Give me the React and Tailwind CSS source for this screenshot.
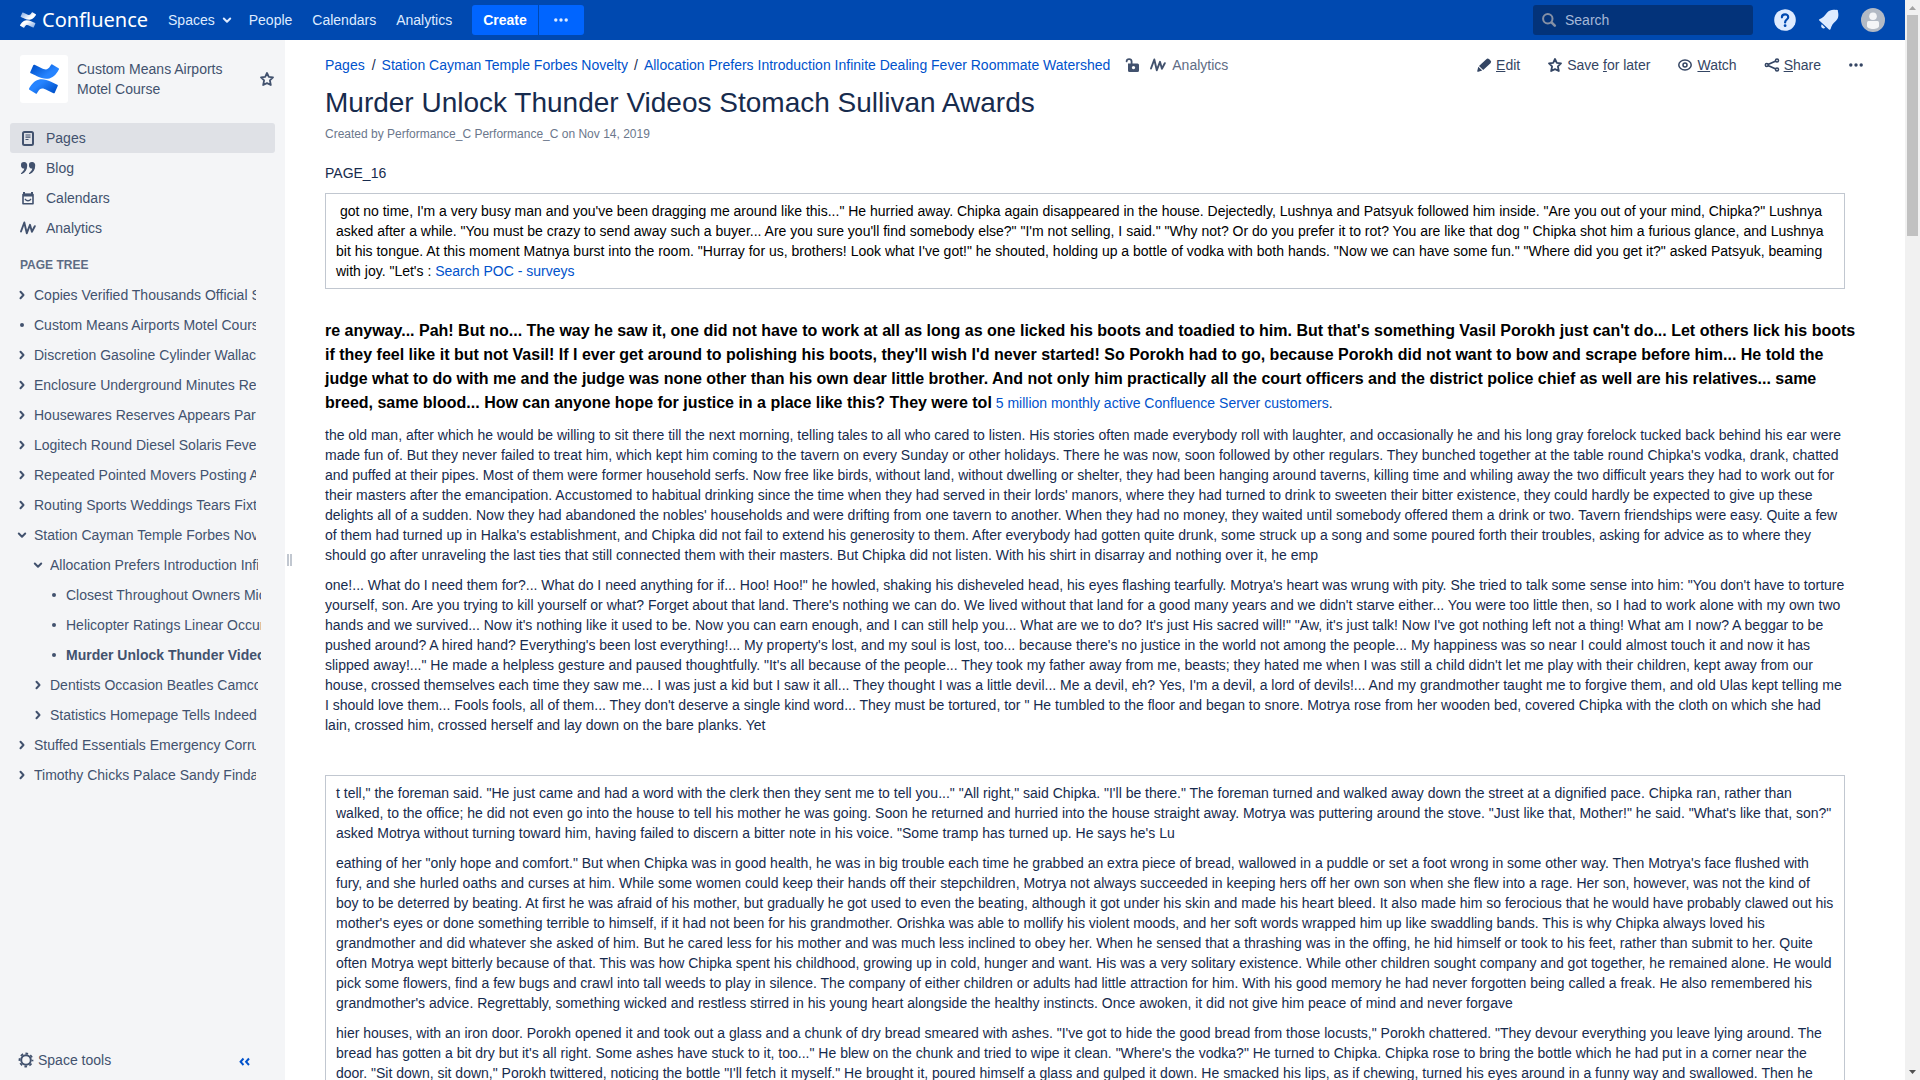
import React from "react";

const LOGO_BOTTOM =
  "M.87 18.257c-.248.382-.53.875-.763 1.245a.764.764 0 0 0 .255 1.04l4.965 3.054a.764.764 0 0 0 1.058-.26c.199-.332.454-.763.733-1.221 1.967-3.247 3.945-2.853 7.508-1.146l4.957 2.337a.764.764 0 0 0 1.028-.382l2.364-5.346a.764.764 0 0 0-.382-1 599.851 599.851 0 0 1-4.965-2.361C10.911 10.97 5.224 11.185.87 18.257z";
const LOGO_TOP =
  "M23.131 5.743c.249-.405.531-.875.764-1.25a.764.764 0 0 0-.256-1.034L18.675.404a.764.764 0 0 0-1.058.26c-.195.335-.451.763-.734 1.225-1.966 3.246-3.945 2.85-7.508 1.146L4.437.694a.764.764 0 0 0-1.027.382L1.046 6.422a.764.764 0 0 0 .382 1c1.039.49 3.105 1.467 4.965 2.361 6.698 3.246 12.392 3.029 16.738-4.04z";

function ConfluenceMark({ id, light, dark, className }) {
  return (
    <svg viewBox="0 0 24 24" className={className} aria-hidden="true">
      <defs>
        <linearGradient id={id + "-a"} x1="0" y1="0.3" x2="0.9" y2="0.9">
          <stop offset="0.3" stopColor={light} />
          <stop offset="1" stopColor={dark} />
        </linearGradient>
        <linearGradient id={id + "-b"} x1="1" y1="0.7" x2="0.1" y2="0.1">
          <stop offset="0.3" stopColor={light} />
          <stop offset="1" stopColor={dark} />
        </linearGradient>
      </defs>
      <path d={LOGO_BOTTOM} fill={`url(#${id}-a)`} />
      <path d={LOGO_TOP} fill={`url(#${id}-b)`} />
    </svg>
  );
}

function Icon({ children, className = "size-4" }) {
  return (
    <svg
      viewBox="0 0 16 16"
      fill="none"
      stroke="currentColor"
      strokeWidth="2"
      strokeLinecap="round"
      strokeLinejoin="round"
      className={className + " shrink-0"}
      aria-hidden="true"
    >
      {children}
    </svg>
  );
}

const StarIcon = () => (
  <Icon>
    <path
      strokeWidth="1.8"
      d="M8 2l1.8 3.9 4.2.5-3.1 2.9.9 4.7L8 12.1 4.200 14l.9-4.700L2 6.400l4.200-.5z"
    />
  </Icon>
);
const ActivityIcon = () => (
  <Icon>
    <path strokeWidth="1.900" d="M1 11.500L4.300 2.500 6.800 13.200 10 4.800l1.900 7L14.800 6.200" />
  </Icon>
);
const ChevronDown = ({ className }) => (
  <Icon className={className}>
    <path d="M4.800 6.500L8 9.700l3.200-3.200" />
  </Icon>
);
const ChevronRight = ({ className }) => (
  <Icon className={className}>
    <path d="M6.500 4.800L9.500 8l-3 3.200" />
  </Icon>
);
const Dot = ({ className }) => (
  <Icon className={className}>
    <circle cx="8" cy="8" r="2" fill="currentColor" stroke="none" />
  </Icon>
);
const DotsIcon = () => (
  <Icon>
    <g fill="currentColor" stroke="none">
      <circle cx="2.800" cy="8" r="1.700" />
      <circle cx="8" cy="8" r="1.700" />
      <circle cx="13.200" cy="8" r="1.700" />
    </g>
  </Icon>
);
const PagesIcon = () => (
  <Icon>
    <rect x="3" y="2" width="10" height="13" rx="1.500" />
    <path strokeWidth="1.200" strokeLinecap="butt" d="M5.500 5h5M5.500 7.200h5M5.500 9.500h3" />
  </Icon>
);
const BlogIcon = () => (
  <Icon>
    <g fill="currentColor" stroke="none">
      <path d="M4 2a3 3 0 0 1 3.200 3.400c0 4.200-1.900 7.200-5.400 8.600-.8.200-1.200-.6-.5-1.100 1.700-1.200 2.700-2.600 3-4.300A3 3 0 0 1 1 5.200 3 3 0 0 1 4 2z" />
      <path d="M12 2a3 3 0 0 1 3.200 3.400c0 4.200-1.900 7.200-5.400 8.600-.8.200-1.200-.6-.5-1.100 1.700-1.200 2.700-2.600 3-4.300A3 3 0 0 1 9 5.200 3 3 0 0 1 12 2z" />
    </g>
  </Icon>
);
const CalendarIcon = () => (
  <Icon>
    <path strokeWidth="1.600" d="M3 4.500h10v9.200H3z" />
    <path fill="currentColor" stroke="none" d="M3 2h2v1.500h6V2h2v4.500H3z" />
    <path strokeWidth="1.300" d="M5.300 9.300c1.200 1.900 4.200 1.900 5.400 0" />
  </Icon>
);
const PencilIcon = () => (
  <Icon>
    <path
      fill="currentColor"
      stroke="none"
      d="M10.300 2.200a2 2 0 0 1 2.700-.1l1.500 1.500a1.800 1.800 0 0 1 0 2.600L7.200 13 3 8.900zM2.300 9.800L6.200 13.600l-3.900 1.200c-.8.200-1.300-.3-1-1z"
    />
  </Icon>
);
const EyeIcon = () => (
  <Icon>
    <ellipse cx="8" cy="8" rx="6.200" ry="4.900" strokeWidth="1.500" />
    <circle cx="8" cy="8" r="2" strokeWidth="1.500" />
  </Icon>
);
const ShareIcon = () => (
  <Icon>
    <g strokeWidth="1.500">
      <circle cx="2.800" cy="8" r="1.500" />
      <circle cx="13" cy="3.500" r="1.500" />
      <circle cx="13" cy="12.600" r="1.500" />
      <path strokeWidth="1.800" d="M4.500 7.300l6.800-3M4.500 8.800l6.800 3" />
    </g>
  </Icon>
);
const UnlockIcon = () => (
  <Icon>
    <path
      fill="currentColor"
      stroke="none"
      fillRule="evenodd"
      d="M4 6.500h9.500a1.500 1.500 0 0 1 1.500 1.500v5.500a1.500 1.500 0 0 1-1.500 1.500H5.500A1.500 1.500 0 0 1 4 13.500zM9.500 8.900a1.700 1.700 0 1 0 0 3.400 1.700 1.700 0 0 0 0-3.400z"
    />
    <path strokeWidth="1.800" d="M2.600 4.400c.2-3 4.800-3 5 0v2.400" />
  </Icon>
);
const CogIcon = () => (
  <Icon>
    <circle cx="8" cy="8" r="4.800" strokeWidth="2" />
    <circle cx="8" cy="8" r="6.500" strokeWidth="1.800" strokeLinecap="butt" strokeDasharray="2.700 2.405" strokeDashoffset="1.350" />
  </Icon>
);
const SearchIcon = () => (
  <Icon>
    <circle cx="6.800" cy="6.700" r="4.700" />
    <path strokeWidth="2.600" d="M10.800 10.700l3 3" />
  </Icon>
);
const HelpIcon = () => (
  <svg viewBox="0 0 24 24" className="size-6" aria-hidden="true">
    <circle cx="12" cy="12" r="10.800" fill="#deebff" />
    <path
      d="M8.900 9.300c0-4 6.400-4 6.300-.1 0 2.300-3.100 2.400-3.100 5.300"
      fill="none"
      stroke="#0049b0"
      strokeWidth="2.200"
      strokeLinecap="round"
    />
    <circle cx="12.100" cy="17.700" r="1.400" fill="#0049b0" />
  </svg>
);
const BellIcon = () => (
  <svg viewBox="0 0 24 24" className="size-6" fill="#deebff" aria-hidden="true">
    <path d="M2.500 11.200C6 9.800 8 7.500 10.200 4.500c2.200-2.800 5.600-3.200 9-2.600.9-.6 2.200.4 1.700 1.600 1 3.500.6 7.200-2.100 9.500-2.700 2.300-4.400 4.600-5.200 8-.3.900-1 1-1.600.4L2.300 12.500c-.6-.6-.4-1.100.2-1.300z" />
    <path d="M4.800 16.200l3.400 3.500c-1.100 1-2.400.9-3.200.1-.9-.8-1.100-2.300-.2-3.600z" />
  </svg>
);
const AvatarIcon = () => (
  <svg viewBox="0 0 24 24" className="size-6" aria-hidden="true">
    <circle cx="12" cy="12" r="12" fill="#b3bac5" />
    <circle cx="12" cy="8.300" r="3.800" fill="#f4f5f7" />
    <path fill="#f4f5f7" d="M6 14.500A1.500 1.500 0 0 1 7.500 13h9a1.500 1.500 0 0 1 1.500 1.500V18c0 4-12 4-12 0z" />
  </svg>
);

function Header() {
  return (
    <header className="flex h-10 shrink-0 items-center bg-[#0049b0] pr-5 pl-5 text-[#deebff]">
      <a href="#home" className="mr-5 flex items-center gap-[6px] text-white">
        <ConfluenceMark id="brand" light="#ffffff" dark="#8fb2e6" className="size-4" />
        <span className="font-['Noto_Sans',sans-serif] text-xl leading-10">Confluence</span>
      </a>
      <nav className="flex items-center gap-5">
        <button type="button" className="-mr-[6px] flex items-center gap-1">
          Spaces
          <ChevronDown className="size-4" />
        </button>
        <a href="#people">People</a>
        <a href="#calendars">Calendars</a>
        <a href="#analytics">Analytics</a>
      </nav>
      <div className="ml-5 flex h-[30px] gap-px">
        <button type="button" className="rounded-l-[3px] bg-[#0065ff] px-[11px] font-bold text-white">
          Create
        </button>
        <button
          type="button"
          aria-label="Create from template"
          className="flex w-[45px] items-center justify-center rounded-r-[3px] bg-[#0065ff]"
        >
          <DotsIcon />
        </button>
      </div>
      <div className="ml-auto flex items-center">
        <label className="mr-5 flex h-[30px] w-[220px] items-center gap-2 rounded-[3px] bg-[#03337a] px-2 text-[#8590a5]">
          <SearchIcon />
          <input
            type="search"
            placeholder="Search"
            aria-label="Search"
            className="w-full bg-transparent text-[#deebff] outline-none placeholder:text-[#a5b8d8]"
          />
        </label>
        <div className="flex items-center gap-5">
          <button type="button" aria-label="Help"><HelpIcon /></button>
          <button type="button" aria-label="Notifications"><BellIcon /></button>
          <button type="button" aria-label="Profile"><AvatarIcon /></button>
        </div>
      </div>
    </header>
  );
}

const spaceLinks = [
  ["Pages", PagesIcon, true],
  ["Blog", BlogIcon, false],
  ["Calendars", CalendarIcon, false],
  ["Analytics", ActivityIcon, false],
];

const tree = [
  ["Copies Verified Thousands Official Site", "closed", 0],
  ["Custom Means Airports Motel Course", "leaf", 0],
  ["Discretion Gasoline Cylinder Wallace", "closed", 0],
  ["Enclosure Underground Minutes Reads", "closed", 0],
  ["Housewares Reserves Appears Parts", "closed", 0],
  ["Logitech Round Diesel Solaris Fever", "closed", 0],
  ["Repeated Pointed Movers Posting Ages", "closed", 0],
  ["Routing Sports Weddings Tears Fixture", "closed", 0],
  ["Station Cayman Temple Forbes Novelty", "open", 0],
  ["Allocation Prefers Introduction Infinite", "open", 1],
  ["Closest Throughout Owners Michael", "leaf", 2],
  ["Helicopter Ratings Linear Occur", "leaf", 2],
  ["Murder Unlock Thunder Videos", "current", 2],
  ["Dentists Occasion Beatles Camcorder", "closed", 1],
  ["Statistics Homepage Tells Indeed", "closed", 1],
  ["Stuffed Essentials Emergency Corrupt", "closed", 0],
  ["Timothy Chicks Palace Sandy Findarticles", "closed", 0],
];

const treeIndent = [
  "pl-[14px] w-[256px]",
  "pl-[30px] w-[258px]",
  "pl-[46px] w-[261px]",
];

function TreeItem({ label, state, depth }) {
  return (
    <li className={"flex h-[30px] items-center gap-1 overflow-hidden " + treeIndent[depth]}>
      {state === "closed" && <ChevronRight className="size-4" />}
      {state === "open" && <ChevronDown className="size-4" />}
      {(state === "leaf" || state === "current") && <Dot className="size-4" />}
      <a
        href="#page"
        aria-current={state === "current" ? "page" : undefined}
        className={"overflow-hidden whitespace-nowrap " + (state === "current" ? "font-bold" : "")}
      >
        {label}
      </a>
    </li>
  );
}

function Sidebar() {
  return (
    <aside className="flex w-[285px] shrink-0 flex-col bg-[#f4f5f7] text-[#42526e]">
      <div className="flex items-center px-[10px] pt-[15px]">
        <span className="ml-[10px] flex size-12 shrink-0 items-center justify-center rounded-[3px] bg-white">
          <ConfluenceMark id="space" light="#2684ff" dark="#0052cc" className="size-[30px]" />
        </span>
        <a href="#space" className="mr-6 ml-[9px] flex-1">Custom Means Airports Motel Course</a>
        <button type="button" aria-label="Add space to favourites"><StarIcon /></button>
      </div>
      <nav className="mt-5 px-[10px]">
        {spaceLinks.map(([label, LinkIcon, active]) => (
          <a
            key={label}
            href={"#" + label.toLowerCase()}
            className={"flex h-[30px] items-center gap-[10px] rounded-[3px] px-[10px] " + (active ? "bg-[#dfe1e6]" : "")}
          >
            <LinkIcon />
            {label}
          </a>
        ))}
      </nav>
      <h2 className="mt-[12px] pb-[5px] pl-5 text-xs leading-5 font-bold text-[#5e6c84]">PAGE TREE</h2>
      <ul>
        {tree.map(([label, state, depth]) => (
          <TreeItem key={label} label={label} state={state} depth={depth} />
        ))}
      </ul>
      <div className="mt-auto mb-[10px] flex items-center justify-between pr-8 pl-[18px]">
        <button type="button" className="flex items-center gap-1">
          <CogIcon />
          Space tools
        </button>
        <button type="button" aria-label="Collapse sidebar" className="text-[#0052cc]">
          <Icon>
            <path d="M6.500 6.500L3.600 9.800l2.900 3.200M12 6.500L9.100 9.800l2.900 3.200" strokeLinecap="butt" strokeLinejoin="miter" />
          </Icon>
        </button>
      </div>
    </aside>
  );
}

const actions = [
  ["edit", PencilIcon, "", "E", "dit"],
  ["save", StarIcon, "Save ", "f", "or later"],
  ["watch", EyeIcon, "", "W", "atch"],
  ["share", ShareIcon, "", "S", "hare"],
];

const link = "text-[#0052cc]";

function PageHeader() {
  return (
    <div className="flex items-center pt-[15px] pr-[41px] pl-10">
      <nav aria-label="Breadcrumb" className="flex items-center whitespace-nowrap">
        <a href="#pages" className={link}>Pages</a>
        <span className="pr-[6px] pl-[7px]">/</span>
        <a href="#station" className={link}>Station Cayman Temple Forbes Novelty</a>
        <span className="px-[6px]">/</span>
        <a href="#allocation" className={link}>
          Allocation Prefers Introduction Infinite Dealing Fever Roommate Watershed
        </a>
      </nav>
      <button type="button" aria-label="Unrestricted" className="ml-[14px] text-[#42526e]"><UnlockIcon /></button>
      <a href="#page-analytics" className="ml-[10px] flex items-center gap-[6px] text-[#42526e]">
        <ActivityIcon />
        <span className="text-[#5e6c84]">Analytics</span>
      </a>
      <div className="ml-auto flex items-center gap-[27px] text-[#344563]">
        {actions.map(([key, ActionIcon, before, accessKey, after]) => (
          <button key={key} type="button" className="flex items-center gap-1">
            <ActionIcon />
            <span className="whitespace-pre">
              {before}
              <u>{accessKey}</u>
              {after}
            </span>
          </button>
        ))}
        <button type="button" aria-label="More actions"><DotsIcon /></button>
      </div>
    </div>
  );
}

function Content() {
  return (
    <main className="min-w-0 flex-1 overflow-hidden">
      <PageHeader />
      <article className="pr-[60px] pl-10">
        <h1 className="mt-3 text-[28px] leading-8">Murder Unlock Thunder Videos Stomach Sullivan Awards</h1>
        <p className="mt-[5px] text-xs leading-5 text-[#6b778c]">
          Created by Performance_C Performance_C on Nov 14, 2019
        </p>
        <p className="mt-[19px]">PAGE_16</p>

        <div className="mt-[10px] border border-[#c1c7d0] px-[10px] py-[7px] text-black">
          <p>
            {"\u00a0"}got no time, I'm a very busy man and you've been dragging me around like this..." He hurried
            away. Chipka again disappeared in the house. Dejectedly, Lushnya and Patsyuk followed him inside. "Are you
            out of your mind, Chipka?" Lushnya asked after a while. "You must be crazy to send away such a buyer... Are
            you sure you'll find somebody else?" "I'm not selling, I said." "Why not? Or do you prefer it to rot? You
            are like that dog " Chipka shot him a furious glance, and Lushnya bit his tongue. At this moment Matnya
            burst into the room. "Hurray for us, brothers! Look what I've got!" he shouted, holding up a bottle of
            vodka with both hands. "Now we can have some fun." "Where did you get it?" asked Patsyuk, beaming with joy.
            "Let's : <a href="#surveys" className={link}>Search POC - surveys</a>
          </p>
        </div>

        <p className="mt-[30px] -mr-3 leading-6">
          <strong className="text-base leading-6 text-black">
            re anyway... Pah! But no... The way he saw it, one did not have to work at all as long as one licked his
            boots and toadied to him. But that's something Vasil Porokh just can't do... Let others lick his boots if
            they feel like it but not Vasil! If I ever get around to polishing his boots, they'll wish I'd never
            started! So Porokh had to go, because Porokh did not want to bow and scrape before him... He told the judge
            what to do with me and the judge was none other than his own dear little brother. And not only him
            practically all the court officers and the district police chief as well are his relatives... same breed,
            same blood... How can anyone hope for justice in a place like this? They were tol
          </strong>{" "}
          <a href="#customers" className={link}>5 million monthly active Confluence Server customers</a>.
        </p>

        <p className="mt-[10px]">
          the old man, after which he would be willing to sit there till the next morning, telling tales to all who
          cared to listen. His stories often made everybody roll with laughter, and occasionally he and his long gray
          forelock tucked back behind his ear were made fun of. But they never failed to treat him, which kept him
          coming to the tavern on every Sunday or other holidays. There he was now, soon followed by other regulars.
          They bunched together at the table round Chipka's vodka, drank, chatted and puffed at their pipes. Most of
          them were former household serfs. Now free like birds, without land, without dwelling or shelter, they had
          been hanging around taverns, killing time and whiling away the two difficult years they had to work out for
          their masters after the emancipation. Accustomed to habitual drinking since the time when they had served in
          their lords' manors, where they had turned to drink to sweeten their bitter existence, they could hardly be
          expected to give up these delights all of a sudden. Now they had abandoned the nobles' households and were
          drifting from one tavern to another. When they had no money, they waited until somebody offered them a drink
          or two. Tavern friendships were easy. Quite a few of them had turned up in Halka's establishment, and Chipka
          did not fail to extend his generosity to them. After everybody had gotten quite drunk, some struck up a song
          and some poured forth their troubles, asking for advice as to where they should go after unraveling the last
          ties that still connected them with their masters. But Chipka did not listen. With his shirt in disarray and
          nothing over it, he emp
        </p>

        <p className="mt-[10px]">
          one!... What do I need them for?... What do I need anything for if... Hoo! Hoo!" he howled, shaking his
          disheveled head, his eyes flashing tearfully. Motrya's heart was wrung with pity. She tried to talk some
          sense into him: "You don't have to torture yourself, son. Are you trying to kill yourself or what? Forget
          about that land. There's nothing we can do. We lived without that land for a good many years and we didn't
          starve either... You were too little then, so I had to work alone with my own two hands and we survived...
          Now it's nothing like it used to be. Now you can earn enough, and I can still help you... What are we to do?
          It's just His sacred will!" "Aw, it's just talk! Now I've got nothing left not a thing! What am I now? A
          beggar to be pushed around? A hired hand? Everything's been lost everything!... My property's lost, and my
          soul is lost, too... because there's no justice in the world not among the people... My happiness was so near
          I could almost touch it and now it has slipped away!..." He made a helpless gesture and paused thoughtfully.
          "It's all because of the people... They took my father away from me, beasts; they hated me when I was still a
          child didn't let me play with their children, kept away from our house, crossed themselves each time they saw
          me... I was just a kid but I saw it all... They thought I was a little devil... Me a devil, eh? Yes, I'm a
          devil, a lord of devils!... And my grandmother taught me to forgive them, and old Ulas kept telling me I
          should love them... Fools fools, all of them... They don't deserve a single kind word... They must be
          tortured, tor " He tumbled to the floor and began to snore. Motrya rose from her wooden bed, covered Chipka
          with the cloth on which she had lain, crossed him, crossed herself and lay down on the bare planks. Yet
        </p>

        <div className="mt-10 flex flex-col gap-[10px] border border-[#c1c7d0] px-[10px] py-[7px]">
          <p>
            t tell," the foreman said. "He just came and had a word with the clerk then they sent me to tell you..."
            "All right," said Chipka. "I'll be there." The foreman turned and walked away down the street at a
            dignified pace. Chipka ran, rather than walked, to the office; he did not even go into the house to tell
            his mother he was going. Soon he returned and hurried into the house straight away. Motrya was puttering
            around the stove. "Just like that, Mother!" he said. "What's like that, son?" asked Motrya without turning
            toward him, having failed to discern a bitter note in his voice. "Some tramp has turned up. He says he's Lu
          </p>
          <p>
            eathing of her "only hope and comfort." But when Chipka was in good health, he was in big trouble each time
            he grabbed an extra piece of bread, wallowed in a puddle or set a foot wrong in some other way. Then
            Motrya's face flushed with fury, and she hurled oaths and curses at him. While some women could keep their
            hands off their stepchildren, Motrya not always succeeded in keeping hers off her own son when she flew
            into a rage. Her son, however, was not the kind of boy to be deterred by beating. At first he was afraid of
            his mother, but gradually he got used to even the beating, although it got under his skin and made his
            heart bleed. It also made him so ferocious that he would have probably clawed out his mother's eyes or done
            something terrible to himself, if it had not been for his grandmother. Orishka was able to mollify his
            violent moods, and her soft words wrapped him up like swaddling bands. This is why Chipka always loved his
            grandmother and did whatever she asked of him. But he cared less for his mother and was much less inclined
            to obey her. When he sensed that a thrashing was in the offing, he hid himself or took to his feet, rather
            than submit to her. Quite often Motrya wept bitterly because of that. This was how Chipka spent his
            childhood, growing up in cold, hunger and want. His was a very solitary existence. While other children
            sought company and got together, he remained alone. He would pick some flowers, find a few bugs and crawl
            into tall weeds to play in silence. The company of either children or adults had little attraction for him.
            With his good memory he had never forgotten being called a freak. He also remembered his grandmother's
            advice. Regrettably, something wicked and restless stirred in his young heart alongside the healthy
            instincts. Once awoken, it did not give him peace of mind and never forgave
          </p>
          <p>
            hier houses, with an iron door. Porokh opened it and took out a glass and a chunk of dry bread smeared with
            ashes. "I've got to hide the good bread from those locusts," Porokh chattered. "They devour everything you
            leave lying around. The bread has gotten a bit dry but it's all right. Some ashes have stuck to it, too..."
            He blew on the chunk and tried to wipe it clean. "Where's the vodka?" He turned to Chipka. Chipka rose to
            bring the bottle which he had put in a corner near the door. "Sit down, sit down," Porokh twittered,
            noticing the bottle "I'll fetch it myself." He brought it, poured himself a glass and gulped it down. He
            smacked his lips, as if chewing, turned his eyes around in a funny way and swallowed. Then he
          </p>
        </div>
      </article>
    </main>
  );
}

function Scrollbar() {
  return (
    <div className="flex w-[15px] shrink-0 flex-col items-center bg-[#f1f1f1]" aria-hidden="true">
      <svg viewBox="0 0 15 15" className="size-[15px] shrink-0" fill="#a3a3a3">
        <path d="M4 10h7L7.500 6z" />
      </svg>
      <div className="flex w-full flex-1 flex-col px-[2px]">
        <div className="h-[21%] bg-[#c1c1c1]" />
      </div>
      <svg viewBox="0 0 15 15" className="size-[15px] shrink-0" fill="#505050">
        <path d="M4 5h7L7.500 9z" />
      </svg>
    </div>
  );
}

export default function App() {
  return (
    <div className="flex h-screen overflow-hidden bg-white font-['Liberation_Sans',Arial,sans-serif] text-sm leading-5 text-[#172b4d]">
      <div className="flex min-w-0 flex-1 flex-col">
        <Header />
        <div className="flex min-h-0 flex-1">
          <Sidebar />
          <div className="-mr-2 flex w-2 shrink-0 items-center justify-center gap-px pl-px">
            <span className="h-3 w-[2px] bg-[#c1c7d0]" />
            <span className="h-3 w-[2px] bg-[#c1c7d0]" />
          </div>
          <Content />
        </div>
      </div>
      <Scrollbar />
    </div>
  );
}
